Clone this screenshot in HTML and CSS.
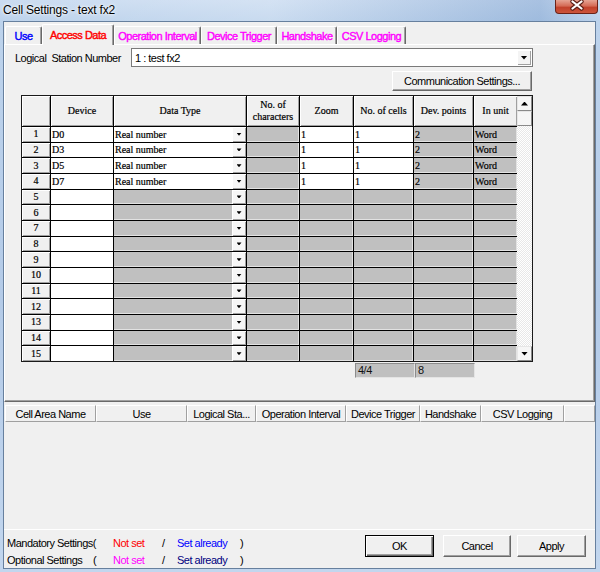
FILE: index.html
```html
<!DOCTYPE html>
<html lang="en">
<head>
<meta charset="utf-8">
<title>Cell Settings - text fx2</title>
<link rel="stylesheet" href="styles.css">
</head>
<body>
<div class="window">
  <div class="titlebar">
    <div class="title">Cell Settings - text fx2</div>
    <div class="close">
      <svg width="43" height="14" viewBox="0 0 43 14">
        <path d="M17.5 1.5 L26.5 8.5 M26.5 1.5 L17.5 8.5" stroke="#5a1d14" stroke-width="4.4" stroke-linecap="round" fill="none"/>
        <path d="M17.5 1.5 L26.5 8.5 M26.5 1.5 L17.5 8.5" stroke="#fff" stroke-width="2.2" stroke-linecap="round" fill="none"/>
      </svg>
    </div>
  </div>
  <div class="client">
    <div class="tabs">
      <div class="tab tab-use c-blue">Use</div>
      <div class="tab tab-access c-red selected">Access Data</div>
      <div class="tab tab-op c-mag">Operation Interval</div>
      <div class="tab tab-dev c-mag">Device Trigger</div>
      <div class="tab tab-hand c-mag">Handshake</div>
      <div class="tab tab-csv c-mag">CSV Logging</div>
    </div>
    <div class="panel">
      <div class="station">
        <span class="lbl">Logical  Station Number</span>
        <div class="combo"><span class="combo-txt">1 : test fx2</span><div class="dd"><i class="tri7"></i></div></div>
      </div>
      <div class="comm-row"><div class="btn comm">Communication Settings...</div></div>
      <div class="gridbox">
        <div class="grid">
          <div class="gh"></div>
          <div class="gh">Device</div>
          <div class="gh">Data Type</div>
          <div class="gh">No. of<br>characters</div>
          <div class="gh">Zoom</div>
          <div class="gh">No. of cells</div>
          <div class="gh">Dev. points</div>
          <div class="gh">In unit</div>

          <div class="rh">1</div><div class="c w">D0</div><div class="c w dt"><span class="txt">Real number</span><span class="ddb"><i class="tri5"></i></span></div><div class="c g"></div><div class="c w">1</div><div class="c w">1</div><div class="c g">2</div><div class="c g">Word</div>
          <div class="rh">2</div><div class="c w">D3</div><div class="c w dt"><span class="txt">Real number</span><span class="ddb"><i class="tri5"></i></span></div><div class="c g"></div><div class="c w">1</div><div class="c w">1</div><div class="c g">2</div><div class="c g">Word</div>
          <div class="rh">3</div><div class="c w">D5</div><div class="c w dt"><span class="txt">Real number</span><span class="ddb"><i class="tri5"></i></span></div><div class="c g"></div><div class="c w">1</div><div class="c w">1</div><div class="c g">2</div><div class="c g">Word</div>
          <div class="rh">4</div><div class="c w">D7</div><div class="c w dt"><span class="txt">Real number</span><span class="ddb"><i class="tri5"></i></span></div><div class="c g"></div><div class="c w">1</div><div class="c w">1</div><div class="c g">2</div><div class="c g">Word</div>

          <div class="rh">5</div><div class="c w"></div><div class="c g dt"><span class="txt"></span><span class="ddb"><i class="tri5"></i></span></div><div class="c g"></div><div class="c g"></div><div class="c g"></div><div class="c g"></div><div class="c g"></div>
          <div class="rh">6</div><div class="c w"></div><div class="c g dt"><span class="txt"></span><span class="ddb"><i class="tri5"></i></span></div><div class="c g"></div><div class="c g"></div><div class="c g"></div><div class="c g"></div><div class="c g"></div>
          <div class="rh">7</div><div class="c w"></div><div class="c g dt"><span class="txt"></span><span class="ddb"><i class="tri5"></i></span></div><div class="c g"></div><div class="c g"></div><div class="c g"></div><div class="c g"></div><div class="c g"></div>
          <div class="rh">8</div><div class="c w"></div><div class="c g dt"><span class="txt"></span><span class="ddb"><i class="tri5"></i></span></div><div class="c g"></div><div class="c g"></div><div class="c g"></div><div class="c g"></div><div class="c g"></div>
          <div class="rh">9</div><div class="c w"></div><div class="c g dt"><span class="txt"></span><span class="ddb"><i class="tri5"></i></span></div><div class="c g"></div><div class="c g"></div><div class="c g"></div><div class="c g"></div><div class="c g"></div>
          <div class="rh">10</div><div class="c w"></div><div class="c g dt"><span class="txt"></span><span class="ddb"><i class="tri5"></i></span></div><div class="c g"></div><div class="c g"></div><div class="c g"></div><div class="c g"></div><div class="c g"></div>
          <div class="rh">11</div><div class="c w"></div><div class="c g dt"><span class="txt"></span><span class="ddb"><i class="tri5"></i></span></div><div class="c g"></div><div class="c g"></div><div class="c g"></div><div class="c g"></div><div class="c g"></div>
          <div class="rh">12</div><div class="c w"></div><div class="c g dt"><span class="txt"></span><span class="ddb"><i class="tri5"></i></span></div><div class="c g"></div><div class="c g"></div><div class="c g"></div><div class="c g"></div><div class="c g"></div>
          <div class="rh">13</div><div class="c w"></div><div class="c g dt"><span class="txt"></span><span class="ddb"><i class="tri5"></i></span></div><div class="c g"></div><div class="c g"></div><div class="c g"></div><div class="c g"></div><div class="c g"></div>
          <div class="rh">14</div><div class="c w"></div><div class="c g dt"><span class="txt"></span><span class="ddb"><i class="tri5"></i></span></div><div class="c g"></div><div class="c g"></div><div class="c g"></div><div class="c g"></div><div class="c g"></div>
          <div class="rh">15</div><div class="c w"></div><div class="c g dt"><span class="txt"></span><span class="ddb"><i class="tri5"></i></span></div><div class="c g"></div><div class="c g"></div><div class="c g"></div><div class="c g"></div><div class="c g"></div>
        </div>
        <div class="vscroll">
          <div class="sb-btn"><i class="tri-up"></i></div>
          <div class="sb-thumb"></div>
          <div class="sb-track"></div>
          <div class="sb-btn"><i class="tri7"></i></div>
        </div>
      </div>
      <div class="totals"><span class="tot">4/4</span><span class="tot">8</span></div>
    </div>
    <div class="list">
      <div class="lhead">
        <div class="lh lh-name">Cell Area Name</div>
        <div class="lh lh-use">Use</div>
        <div class="lh lh-log">Logical Sta...</div>
        <div class="lh lh-op">Operation Interval</div>
        <div class="lh lh-dev">Device Trigger</div>
        <div class="lh lh-hand">Handshake</div>
        <div class="lh lh-csv">CSV Logging</div>
        <div class="lh lh-fill"></div>
      </div>
    </div>
    <div class="footer">
      <div class="status">
        <span class="span2">Mandatory Settings(</span>
        <span class="c-red">Not set</span>
        <span>/</span>
        <span class="c-blue">Set already</span>
        <span>)</span>
        <span>Optional Settings</span>
        <span>(</span>
        <span class="c-mag">Not set</span>
        <span>/</span>
        <span class="c-navy">Set already</span>
        <span>)</span>
      </div>
      <div class="buttons">
        <div class="btn btn-ok">OK</div>
        <div class="btn btn-cancel">Cancel</div>
        <div class="btn btn-apply">Apply</div>
      </div>
    </div>
  </div>
</div>
</body>
</html>
```

FILE: styles.css
```css
* { box-sizing: border-box; }
html, body { margin: 0; padding: 0; }
body {
  width: 600px; height: 572px; overflow: hidden;
  font-family: "Liberation Sans", Arial, sans-serif;
  font-size: 11px; letter-spacing: -0.5px; color: #000;
  background: #b8cfea;
}
.window {
  width: 600px; height: 572px;
  display: flex; flex-direction: column;
  background: linear-gradient(180deg, #cbdcf1 0px, #bdd3ec 21px, #b4cbe8 300px, #c2d6ee 572px);
}
.titlebar {
  height: 21px; display: flex; justify-content: space-between; align-items: flex-start;
  background: linear-gradient(90deg, rgba(255,255,255,0) 0, rgba(255,255,255,0.18) 45%, rgba(80,125,185,0.28) 90%, rgba(255,255,255,0) 100%);
}
.title {
  font-size: 12px; letter-spacing: -0.2px; line-height: 14px;
  padding: 3px 0 0 3px;
  text-shadow: 0 0 4px #fff, 0 0 2px #fff;
}
.close {
  width: 43px; height: 14px; margin-right: 2px;
  border: 1px solid #6b2218; border-top: none; border-radius: 0 0 4px 4px;
  background: linear-gradient(180deg, #e6a393 0, #d56c57 45%, #c2412b 58%, #cc553c 100%);
}
.close svg { display: block; margin-left: -1px; }

.client {
  margin: 0 4px 0 3px; height: 548px;
  border: 1px solid #67809e; background: #f0f0f0;
  display: flex; flex-direction: column;
}

.c-blue { color: #0000ff; }
.c-red { color: #ff0000; }
.c-mag { color: #ff00ff; }
.c-navy { color: #000080; }

/* tabs */
.tabs { height: 22px; display: flex; align-items: flex-end; padding-left: 1px; }
.tab {
  height: 18px; display: flex; align-items: center; justify-content: center;
  background: #f0f0f0;
  border-top: 1px solid #fff; border-left: 1px solid #fff; border-right: 1px solid #696969;
  box-shadow: inset -1px 0 0 #a0a0a0;
  border-radius: 2px 2px 0 0;
  -webkit-text-stroke: 0.4px currentColor;
  padding-top: 1px; white-space: nowrap;
}
.tab.selected { height: 21px; margin-bottom: -1px; position: relative; z-index: 1; padding-bottom: 2px; }
.tab-use { width: 37px; }
.tab-access { width: 72px; }
.tab-op { width: 87px; }
.tab-dev { width: 76px; }
.tab-hand { width: 60px; }
.tab-csv { width: 69px; }

/* panel */
.panel {
  height: 358px;
  border-top: 1px solid #fff; border-left: 1px solid #fff;
  border-right: 1px solid #696969; border-bottom: 1px solid #696969;
  box-shadow: inset -1px -1px 0 #a0a0a0;
  padding-top: 3px;
  display: flex; flex-direction: column; align-items: flex-start;
}
.station { display: flex; align-items: center; height: 19px; padding-left: 10px; }
.lbl { width: 116px; white-space: pre; }
.combo {
  width: 402px; height: 19px; border: 1px solid #7a7a7a; background: #fff;
  display: flex; align-items: center; padding-left: 3px;
}
.combo-txt { flex: 1; }
.dd {
  width: 14px; height: 15px; margin-right: 1px; background: #f4f4f4;
  box-shadow: inset 1px 1px 0 #fff, inset -1px -1px 0 #a0a0a0;
  display: flex; align-items: center; justify-content: center;
}
.tri7 { display: block; width: 7px; height: 4px; background: #000; clip-path: polygon(0 0, 100% 0, 50% 100%); }
.tri-up { display: block; width: 7px; height: 4px; background: #000; clip-path: polygon(50% 0, 100% 100%, 0 100%); }
.tri5 { display: block; width: 5px; height: 3px; background: #000; clip-path: polygon(0 0, 100% 0, 50% 100%); }

.comm-row { width: 527px; display: flex; justify-content: flex-end; margin-top: 4px; }
.btn {
  height: 20px; background: #f0f0f0;
  border: 1px solid; border-color: #fff #696969 #696969 #fff;
  box-shadow: inset -1px -1px 0 #a0a0a0;
  display: flex; align-items: center; justify-content: center; white-space: nowrap;
}
.comm { width: 140px; }

/* grid */
.gridbox { margin: 4px 0 0 16px; display: flex; border: 1px solid #1a1a1a; height: 267px; }
.grid {
  display: grid;
  grid-template-columns: 28px 62px 132px 52px 53px 59px 59px 43px;
  grid-template-rows: 30px repeat(15, 1fr);
  gap: 1px; background: #000;
  width: 495px; height: 265px;
  font-family: "Liberation Serif", "Times New Roman", serif;
  font-size: 10px; letter-spacing: 0;
  -webkit-text-stroke: 0.2px #000;
}
.gh, .rh {
  background: #f0f0f0;
  box-shadow: inset 1px 1px 0 #fff, inset -1px -1px 0 #a0a0a0;
  display: flex; align-items: center; justify-content: center;
  text-align: center; line-height: 12px;
}
.c { display: flex; align-items: center; padding-left: 1px; white-space: nowrap; overflow: hidden; }
.w { background: #fff; }
.g { background: #c0c0c0; box-shadow: inset -1px -1px 0 #e2e2e2; }
.dt .txt { flex: 1; }
.ddb {
  width: 14px; align-self: stretch; background: #f6f6f6;
  box-shadow: inset 1px 1px 0 #fff, inset -1px -1px 0 #a0a0a0;
  display: flex; align-items: center; justify-content: center;
}
.vscroll {
  width: 15px; display: flex; flex-direction: column;
  background: repeating-conic-gradient(#fff 0 25%, #e8e8e8 0 50%) 0 0 / 2px 2px;
}
.sb-btn, .sb-thumb {
  height: 15px; background: #f6f6f6;
  border: 1px solid; border-color: #e6e6e6 #8a8a8a #8a8a8a #e6e6e6;
  display: flex; align-items: center; justify-content: center;
}
.sb-track { flex: 1; }

.totals { display: flex; margin: 1px 0 0 350px; }
.tot {
  width: 60px; height: 15px; background: #c0c0c0;
  border: 1px solid; border-color: #8c8c8c #e4e4e4 #e4e4e4 #8c8c8c;
  padding-left: 2px; line-height: 13px; color: #111;
}

/* list */
.list { height: 128px; padding: 3px 0 0 1px; border-bottom: 1px solid #fff; }
.lhead { display: flex; height: 17px; }
.lh {
  height: 17px;
  border-top: 1px solid #fff; border-left: 1px solid #fff;
  border-right: 1px solid #a0a0a0; border-bottom: 1px solid #a0a0a0;
  display: flex; align-items: center; justify-content: center;
  white-space: nowrap; overflow: hidden;
}
.lh-name { width: 91px; }
.lh-use { width: 91px; }
.lh-log { width: 69px; }
.lh-op { width: 90px; }
.lh-dev { width: 74px; }
.lh-hand { width: 61px; }
.lh-csv { width: 83px; }
.lh-fill { flex: 1; }

/* footer */
.footer { flex: 1; display: flex; justify-content: space-between; padding: 4px 9px 0 3px; }
.status {
  display: grid;
  grid-template-columns: 86px 20px 49px 15px 63px auto;
  grid-auto-rows: 17px; align-items: center;
}
.span2 { grid-column: span 2; }
.buttons { display: flex; padding-top: 1px; }
.buttons .btn { width: 69px; height: 22px; }
.btn-cancel { width: 68px !important; margin: 0 6px 0 9px; }
.btn-ok {
  border: 1px solid #000 !important;
  box-shadow: inset 1px 1px 0 #fff, inset -1px -1px 0 #696969, inset -2px -2px 0 #a0a0a0;
}
```
